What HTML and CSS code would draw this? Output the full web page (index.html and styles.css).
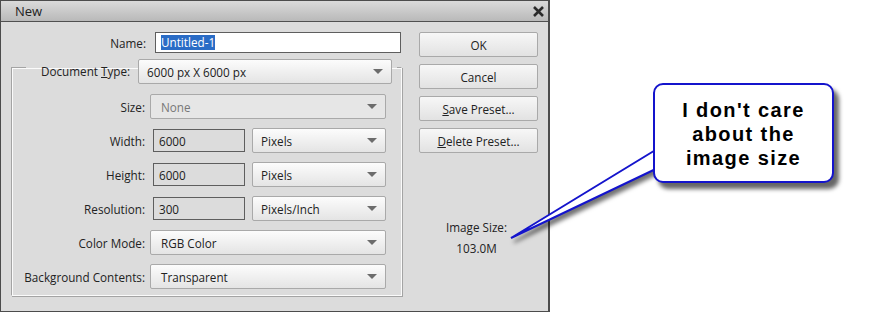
FILE: index.html
```html
<!DOCTYPE html>
<html>
  <head>
    <title>New</title>
    <link rel="stylesheet" href="styles.css">
  </head>
  <body>
    <div class="screen">
      <div class="dialog">
        <div class="titlebar">
          <span class="title">New</span>
          <svg class="close" width="11" height="11" viewBox="0 0 11 11">
            <path d="M1 1 L10 10 M10 1 L1 10" stroke="#2b2b2b" stroke-width="2.6" />
          </svg>
        </div>

        <div class="main">
          <div class="left">
            <div class="name-row">
              <label class="lbl name-lbl">Name:</label>
              <div class="textbox white"><span class="sel">Untitled-1</span></div>
            </div>

            <fieldset class="group">
              <legend class="legend">
                <label class="lbl">Document <u>T</u>ype:</label>
                <div class="dropdown doc">
                  <span>6000 px X 6000 px</span><span class="arrow"></span>
                </div>
              </legend>

              <div class="rows">
                <label class="lbl">Size:</label>
                <div class="dropdown disabled"><span>None</span><span class="arrow"></span></div>

                <label class="lbl">Width:</label>
                <div class="pair">
                  <div class="textbox">6000</div>
                  <div class="dropdown unit"><span>Pixels</span><span class="arrow"></span></div>
                </div>

                <label class="lbl">Height:</label>
                <div class="pair">
                  <div class="textbox">6000</div>
                  <div class="dropdown unit"><span>Pixels</span><span class="arrow"></span></div>
                </div>

                <label class="lbl">Resolution:</label>
                <div class="pair">
                  <div class="textbox">300</div>
                  <div class="dropdown unit"><span>Pixels/Inch</span><span class="arrow"></span></div>
                </div>

                <label class="lbl">Color Mode:</label>
                <div class="dropdown"><span>RGB Color</span><span class="arrow"></span></div>

                <label class="lbl">Background Contents:</label>
                <div class="dropdown"><span>Transparent</span><span class="arrow"></span></div>
              </div>
            </fieldset>
          </div>

          <div class="right">
            <div class="btn">OK</div>
            <div class="btn">Cancel</div>
            <div class="btn"><u>S</u>ave Preset...</div>
            <div class="btn"><u>D</u>elete Preset...</div>
            <div class="info">
              <div>Image Size:</div>
              <div>103.0M</div>
            </div>
          </div>
        </div>
      </div>

      <svg class="tail" width="882" height="313" viewBox="0 0 882 313">
        <polygon points="662,146 511,238 662,166" fill="#fff" stroke="#1414cc" stroke-width="2" />
      </svg>

      <div class="callout">I don't care<br>about the<br>image size</div>
    </div>
  </body>
</html>
```

FILE: styles.css
```css
* {
  box-sizing: border-box;
}
body {
  margin: 0;
  background: #fff;
  font-family: "Open Sans", "Noto Sans", sans-serif;
  font-size: 11.7px;
  color: #222;
}
.screen {
  position: relative;
  width: 882px;
  height: 313px;
}
.dialog {
  width: 550px;
  height: 312px;
  background: #dcdcdc;
  border: 1px solid #4c4c4c;
  border-right-width: 2px;
}
.titlebar {
  height: 21px;
  display: flex;
  align-items: center;
  justify-content: space-between;
  padding: 0 4px 0 14px;
  background: linear-gradient(#dadada, #b9b9b9);
  border-bottom: 1px solid #505050;
}
.title {
  font-size: 13px;
}
.main {
  display: flex;
  padding: 10px 0 0 10px;
}
.lbl {
  text-align: right;
  white-space: nowrap;
}

/* name */
.name-row {
  display: flex;
  align-items: center;
  height: 21px;
}
.name-lbl {
  width: 135px;
  margin-right: 9px;
}
.textbox {
  height: 23px;
  width: 92px;
  margin-left: 3px;
  border: 1px solid #5e5e5e;
  padding: 0 5px;
  display: flex;
  align-items: center;
}
.textbox.white {
  width: 246px;
  height: 21px;
  margin-left: 0;
  background: #fff;
}
.sel {
  background: #2a6cc6;
  color: #fff;
  line-height: 15px;
}

/* group box */
.group {
  width: 391px;
  margin: 6px 0 0 0;
  padding: 18px 0 6px 0;
  border-style: solid;
  border-width: 1px;
  border-color: #a4a4a4 #fbfbfb #fbfbfb #a4a4a4;
  box-shadow: inset 1px 1px 0 #fbfbfb, 1px 1px 0 #a4a4a4;
}
.legend {
  display: flex;
  align-items: flex-start;
  height: 17px;
  margin-left: 14px;
  padding: 0 5px 0 15px;
}
.legend .lbl {
  margin-right: 8px;
  line-height: 25px;
}
.rows {
  display: grid;
  grid-template-columns: 133px 236px;
  column-gap: 5px;
  row-gap: 9px;
  align-items: center;
}
.pair {
  display: flex;
  align-items: center;
}

/* dropdowns */
.dropdown {
  height: 25px;
  display: flex;
  align-items: center;
  justify-content: space-between;
  padding: 0 8px 0 10px;
  border: 1px solid #a9a9a9;
  border-radius: 2px;
  background: linear-gradient(#fcfcfc, #e4e4e4);
}
.dropdown.doc {
  width: 254px;
  padding-left: 8px;
}
.dropdown.unit {
  width: 134px;
  margin-left: 7px;
  padding-left: 8px;
}
.dropdown.disabled {
  background: #e6e6e6;
  color: #777;
}
.arrow {
  width: 0;
  height: 0;
  border-left: 5px solid transparent;
  border-right: 5px solid transparent;
  border-top: 5px solid #6c6c6c;
}

/* buttons */
.right {
  display: flex;
  flex-direction: column;
  gap: 7px;
  width: 119px;
  margin-left: 17px;
}
.btn {
  height: 25px;
  display: flex;
  align-items: center;
  justify-content: center;
  border: 1px solid #a9a9a9;
  border-radius: 2px;
  background: linear-gradient(#f7f7f7, #e2e2e2);
}
.info {
  margin-top: 57px;
  text-align: center;
  line-height: 21px;
  padding-right: 4px;
}

/* annotation */
.tail {
  position: absolute;
  left: 0;
  top: 0;
  pointer-events: none;
  filter: drop-shadow(3px 4px 2px rgba(0, 0, 0, 0.55));
}
.callout {
  position: absolute;
  left: 653px;
  top: 83px;
  width: 181px;
  height: 100px;
  padding-top: 13px;
  background: #fff;
  border: 2px solid #1414cc;
  border-radius: 10px;
  box-shadow: 5px 6px 4px rgba(0, 0, 0, 0.6);
  font-family: "Liberation Sans", Arial, sans-serif;
  font-weight: bold;
  font-size: 20px;
  line-height: 24px;
  letter-spacing: 1.4px;
  text-align: center;
  color: #000;
}
```
